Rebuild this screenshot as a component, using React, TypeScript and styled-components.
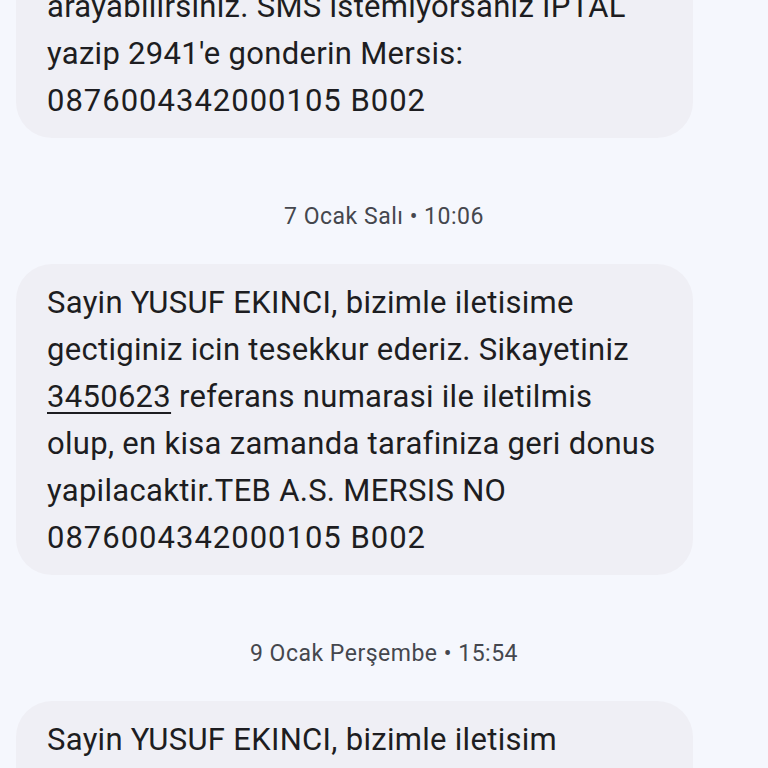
import React from 'react';
import styled, { createGlobalStyle } from 'styled-components';

const GlobalStyle = createGlobalStyle`
  html, body {
    margin: 0;
    padding: 0;
    background: #f5f7fd;
  }
  body {
    font-family: Roboto, "Noto Sans", sans-serif;
    -webkit-font-smoothing: antialiased;
  }
`;

const Screen = styled.div`
  width: 768px;
  height: 768px;
  overflow: hidden;
  background: #f5f7fd;
`;

const Thread = styled.div`
  display: flex;
  flex-direction: column;
  align-items: flex-start;
  margin-top: -79px;
  padding: 0 16px;
`;

const Bubble = styled.div`
  box-sizing: border-box;
  width: 677px;
  padding: 15px 31px 14px;
  background: #efeff5;
  border-radius: 36px;
  color: #1d1d21;
  font-size: 31px;
  letter-spacing: 0.3px;
  line-height: 47px;
`;

const Line = styled.div`
  white-space: nowrap;
`;

const Ref = styled.span`
  text-decoration: underline;
  text-decoration-thickness: 2px;
  text-underline-offset: 5px;
`;

// company registry number, digits run a bit wider in the original font
const Code = styled.span`
  letter-spacing: 1px;
`;

const DateLabel = styled.div`
  align-self: stretch;
  text-align: center;
  padding: 66px 0 34px;
  color: #45474e;
  font-size: 23px;
  letter-spacing: 0.5px;
  line-height: 26px;
`;

type Message = {
  date?: string;
  lines: React.ReactNode[];
};

const mersis = <Code>0876004342000105 B002</Code>;

const messages: Message[] = [
  {
    lines: [
      'Sayin musterimiz, bilgi icin 0850 222 0 900',
      'arayabilirsiniz. SMS istemiyorsaniz IPTAL',
      "yazip 2941'e gonderin Mersis:",
      mersis,
    ],
  },
  {
    date: '7 Ocak Salı • 10:06',
    lines: [
      'Sayin YUSUF EKINCI, bizimle iletisime',
      'gectiginiz icin tesekkur ederiz. Sikayetiniz',
      <>
        <Ref>3450623</Ref> referans numarasi ile iletilmis
      </>,
      'olup, en kisa zamanda tarafiniza geri donus',
      'yapilacaktir.TEB A.S. MERSIS NO',
      mersis,
    ],
  },
  {
    date: '9 Ocak Perşembe • 15:54',
    lines: [
      'Sayin YUSUF EKINCI, bizimle iletisim',
      'kurdugunuz icin tesekkur ederiz.',
    ],
  },
];

export default function App() {
  return (
    <>
      <GlobalStyle />
      <Screen>
        <Thread>
          {messages.map((m, i) => (
            <React.Fragment key={i}>
              {m.date && <DateLabel>{m.date}</DateLabel>}
              <Bubble>
                {m.lines.map((l, j) => (
                  <Line key={j}>{l}</Line>
                ))}
              </Bubble>
            </React.Fragment>
          ))}
        </Thread>
      </Screen>
    </>
  );
}
